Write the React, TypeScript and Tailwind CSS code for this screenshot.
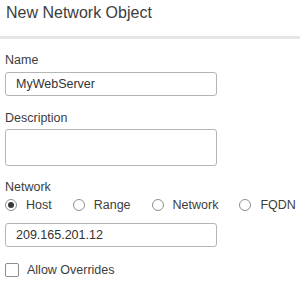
import React from 'react';

const Radio = ({ label, checked = false }: { label: string; checked?: boolean }) => (
  <label className="flex items-center gap-[9px]">
    <span className="flex h-[12px] w-[12px] items-center justify-center rounded-full border border-[#8e8e8e] bg-white">
      {checked && <span className="h-[6px] w-[6px] rounded-full bg-[#3a3a3a]" />}
    </span>
    <span>{label}</span>
  </label>
);

export default function App() {
  return (
    <div
      className="h-[297px] w-[300px] overflow-hidden bg-white text-[#3d3d3d]"
      style={{ fontFamily: '"Liberation Sans", Arial, sans-serif' }}
    >
      <div className="h-[36px] pl-[6px] pt-[1px]">
        <h2 className="text-[16px] leading-6">New Network Object</h2>
      </div>
      <div className="h-[3px] bg-[#e6e6e6]" />

      <div className="px-[5px] pt-[13px] text-[12.5px] leading-[16px]">
        <div>Name</div>
        <input
          readOnly
          value="MyWebServer"
          className="mt-[4px] block h-[24px] w-[212px] rounded-[3px] border border-[#b5b5b5] px-[10px] text-[#333] outline-none"
        />

        <div className="mt-[14px]">Description</div>
        <div className="mt-[3px] h-[37px] w-[212px] rounded-[3px] border border-[#b5b5b5]" />

        <div className="mt-[13px]">Network</div>
        <div className="mt-[2px] flex h-[16px] items-center gap-x-[21px]">
          <Radio label="Host" checked />
          <Radio label="Range" />
          <Radio label="Network" />
          <Radio label="FQDN" />
        </div>
        <input
          readOnly
          value="209.165.201.12"
          className="mt-[10px] block h-[24px] w-[212px] rounded-[3px] border border-[#b5b5b5] px-[10px] text-[#333] outline-none"
        />

        <label className="mt-[15px] flex h-[16px] items-center gap-[8px]">
          <span className="h-[14px] w-[14px] rounded-[2px] border border-[#8e8e8e] bg-white" />
          <span>Allow Overrides</span>
        </label>
      </div>
    </div>
  );
}
